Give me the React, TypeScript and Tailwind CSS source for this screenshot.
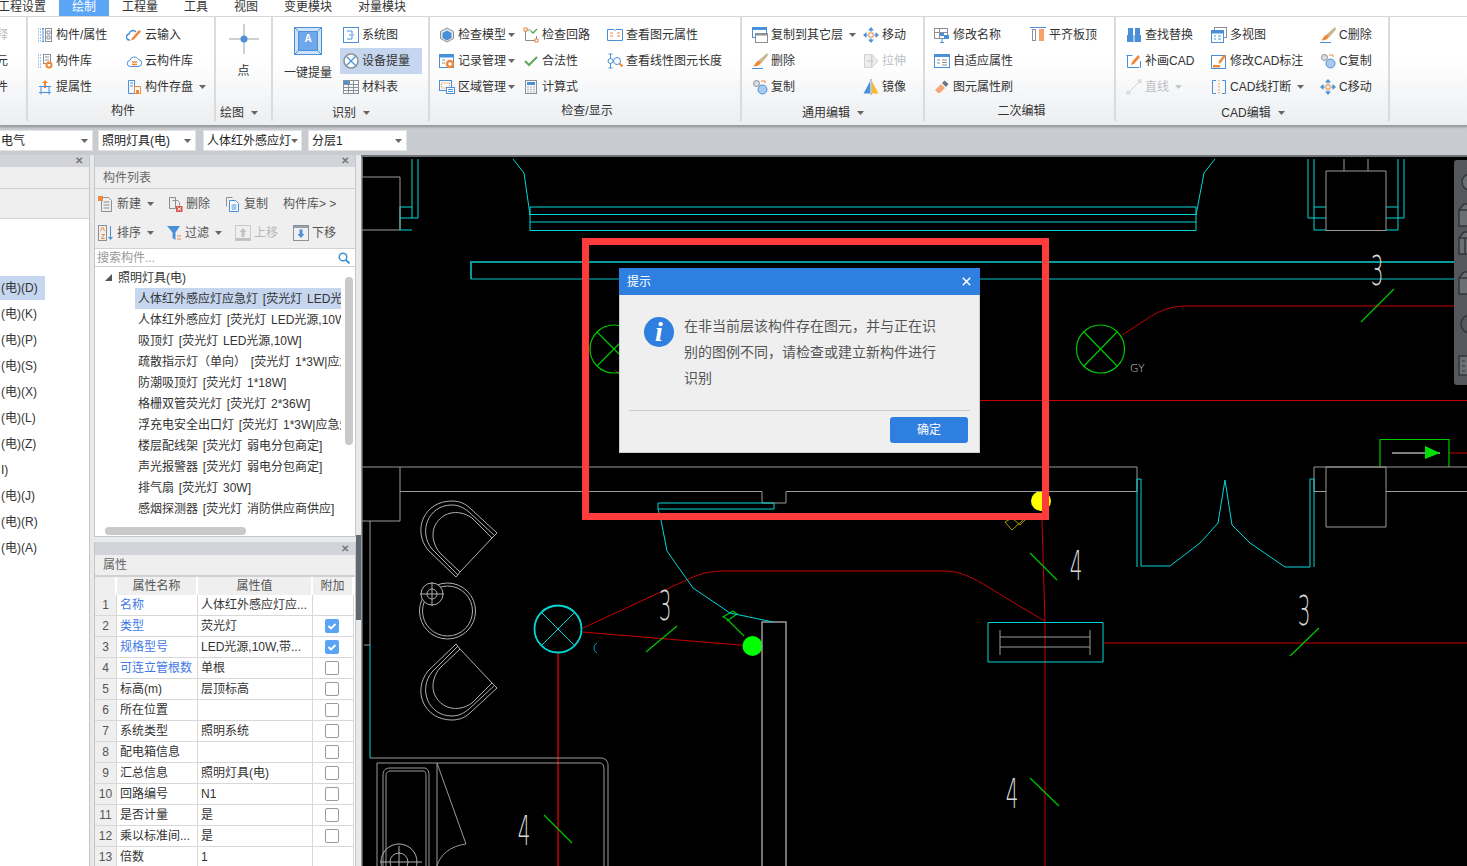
import React from "react";

const B = "#4a90d9";
const O = "#f0883a";
const G = "#8b9097";

function Ico({ children }: { children: React.ReactNode }) {
  return (
    <svg width="16" height="16" viewBox="0 0 16 16" fill="none" strokeWidth="1" className="shrink-0">
      {children}
    </svg>
  );
}

const icons: Record<string, React.ReactNode> = {
  attr: <><path d="M1 2h3M1 5h3M1 8h3M1 11h3M1 14h3" stroke={B} strokeDasharray="1 1" /><path d="M5 1.500h2M5 14.500h2M6 1.500v13" stroke={B} /><rect x="8.500" y="1.500" width="6" height="13" stroke={G} /><path d="M10 4h3v3h-3zM10 9h3v3h-3z" stroke={G} /></>,
  lib: <><path d="M1 2h3M1 5h3M1 8h3M1 11h3M1 14h3" stroke={B} strokeDasharray="1 1" /><rect x="6.500" y="1.500" width="7" height="9" stroke={G} /><path d="M8 4h4M8 7h4" stroke={G} /><circle cx="12" cy="12" r="2.500" stroke={O} strokeWidth="2" /></>,
  up: <><path d="M8 1 5 4h2v5h2V4h2z" fill={O} /><path d="M2 7.500h12M2 13.500h12M4 7.500v8M12 7.500v8" stroke={B} /></>,
  cloudIn: <><path d="M4 13a3 3 0 0 1-1-6 4 4 0 0 1 7-2" stroke={B} strokeWidth="1.500" /><path d="M6 11 13 3l2 1.500-7 8-3 1z" fill={O} /></>,
  cloudLib: <><path d="M4.500 13.500a3 3 0 0 1-.5-6 4.500 4.500 0 0 1 8.500-1 3.500 3.500 0 0 1-.5 7z" stroke={B} /><path d="M6 9h5M6 11.500h5" stroke={O} strokeWidth="1.500" /></>,
  save: <><path d="M2.500 14.500v-13h6v13z" stroke={B} /><path d="M4 4h3M4 7h3" stroke={B} /><path d="M8.500 7.500h6v7h-6z" stroke={O} fill="#fff" /><rect x="10" y="11" width="3" height="3" fill={O} /></>,
  sysd: <><rect x="0.500" y="0.500" width="15" height="15" stroke={B} /><path d="M4 4h5v3M6 8h5M4 12h5V9" stroke={B} /></>,
  device: <><circle cx="8" cy="8" r="7" stroke={G} strokeWidth="1.500" fill="#fff" /><path d="m3.500 3.500 9 9M12.500 3.500l-9 9" stroke={B} strokeWidth="1.200" /></>,
  table: <><rect x="0.500" y="1.500" width="15" height="13" stroke={G} /><rect x="1" y="2" width="6" height="3" fill={B} /><path d="M.5 5.500h15M.5 8.500h15M.5 11.500h15M5.500 2v12.500M10.500 2v12.500" stroke={G} /></>,
  cube: <><path d="M8 1 1.500 4.500v7L8 15l6.500-3.500v-7z" stroke={G} fill="#e3e6ea" /><path d="M8 3.500 3.500 6v5L8 13.500l4.500-2.500V6z" fill={B} /></>,
  record: <><rect x="0.500" y="1.500" width="14" height="13" stroke={B} fill="#fff" /><rect x="1" y="2" width="13" height="2.500" fill={B} /><path d="M3 7h3M3 10h3" stroke={G} /><circle cx="11" cy="11" r="3" stroke={O} strokeWidth="2.500" /></>,
  region: <><rect x="0.500" y="1.500" width="12" height="10" stroke={B} /><rect x="2.500" y="4" width="8" height="5" stroke={O} strokeDasharray="1 1" /><rect x="7.500" y="8.500" width="8" height="6" stroke={B} fill="#fff" /><path d="M9 10.500h5M9 12.500h5" stroke={B} /></>,
  loop: <><rect x="1" y="1" width="3" height="3" stroke={O} /><rect x="12" y="12" width="3" height="3" stroke={O} /><path d="M4 3h4M2.500 4v9.500H12M13.500 12V9" stroke={G} /><path d="m8 4 2 2 4-4" stroke="#4aa84a" strokeWidth="1.300" /></>,
  check: <path d="m2 8 4 4 8-8" stroke="#5aa85a" strokeWidth="2" />,
  calc: <><rect x="2.500" y="1.500" width="11" height="13" stroke={G} /><rect x="4" y="3" width="8" height="3" fill={B} /><path d="M4.500 8h1M7.500 8h1M10.500 8h1M4.500 10.500h1M7.500 10.500h1M10.500 10.500h1M4.500 12.800h1M7.500 12.800h1M10.500 12.800h1" stroke={G} strokeWidth="1.300" /></>,
  book: <><path d="M.5 13.500h15M.5 2.500h6.500l1 1 1-1h6.500v11" stroke={B} /><path d="M.5 2.500v11" stroke={B} /><path d="M3 6h3M3 9h3M10 6h3M10 9h3" stroke={O} /></>,
  lineLen: <><path d="M3.500 1v14M1.500 1h4M1.500 15h4" stroke={B} /><circle cx="3.500" cy="8" r="2.500" stroke={B} fill="#fff" /><circle cx="10" cy="8" r="3.500" stroke={B} fill="#fff" /><path d="m12.500 10.500 3 3" stroke={O} strokeWidth="2" /></>,
  copyLayer: <><rect x="0.500" y="0.500" width="14" height="10" stroke={B} /><rect x="0.500" y="0.500" width="14" height="2.500" fill={B} /><rect x="3.500" y="6.500" width="12" height="9" stroke={G} fill="#fff" /><rect x="3.500" y="6.500" width="12" height="2" fill={G} /></>,
  move: <><path d="M8 0 5 3.500h6zM8 16l-3-3.500h6zM0 8l3.500-3v6zM16 8l-3.500-3v6z" fill={B} /><path d="M8 3v2M8 11v2M3 8h2M11 8h2" stroke={B} /><rect x="6" y="6" width="4" height="4" stroke={O} /></>,
  brush: <><path d="M15 .5 7 7.500l2 2.500 6.500-7.500z" fill="#d9b67a" stroke="#999" strokeWidth="0.500" /><path d="M7 7.500C4 8.500 3 11 1.500 13.500 4.500 13.500 7.500 12.500 9 10z" fill={O} /><path d="M0 15.500h11" stroke={B} /></>,
  stretch: <><path d="M1.500 1.500h7v13h-7zM9 1.500l6 6.500-6 6.500z" stroke="#cfd1d4" fill="#eceded" /><path d="M4 8h6" stroke="#bdbfc2" /></>,
  copy: <><circle cx="4.500" cy="4.500" r="3" stroke={G} fill="#d9dde2" /><circle cx="10.500" cy="10.500" r="4.500" stroke={B} fill="#a9c9ee" /><path d="M9 2h4v2" stroke={O} /></>,
  mirror: <><path d="M7 2.500v12H.5z" fill={B} /><path d="M9 2.500v12h6.500z" fill="#f5b82e" /><path d="M8 0v16" stroke={G} /></>,
  rename: <><rect x="0.500" y="1.500" width="13" height="10" stroke={G} /><path d="M.5 5.500h13M5.500 1.500v10" stroke={G} /><rect x="6" y="6" width="4" height="3" fill={B} /><rect x="10" y="8" width="5" height="4" fill={B} /><path d="M8 11v4M6 15.500h4" stroke={B} /></>,
  alignTop: <><path d="M0 .5h16" stroke={B} /><rect x="2.500" y="2.500" width="3" height="11" stroke={G} /><rect x="9" y="2" width="5" height="12" fill="#f7a06a" /></>,
  fit: <><rect x="0.500" y="1.500" width="15" height="13" stroke={B} fill="#fff" /><rect x="1" y="2" width="14" height="2" fill={B} /><path d="M3 7h3M3 10h3M8 7h5M8 9.500h5M8 12h5" stroke={G} /></>,
  paint: <><path d="m1 11 6-6 4 4-5 5H4z" fill="#f7a77a" /><path d="m8 4 2.500-2.500L14.500 5 12 8z" fill="#6d7480" /></>,
  find: <><rect x="1" y="8" width="14" height="7" fill={B} /><rect x="2" y="1" width="5" height="8" fill={B} /><rect x="9" y="1" width="5" height="8" fill={B} /><path d="M8 7v8" stroke="#fff" /></>,
  redraw: <><path d="M1.500 2v12.500H13" stroke={B} /><path d="M.5 2.500h6M14.500 8v7" stroke={B} /><path d="m6 9 6-7 2 2-6 7-3 1z" fill={O} /></>,
  line: <><path d="M2.500 13.500 13.500 2.500" stroke="#cfd1d4" /><rect x="1" y="12.500" width="2.500" height="2.500" stroke="#cfd1d4" /><rect x="12.500" y="1" width="2.500" height="2.500" stroke="#cfd1d4" /></>,
  multi: <><rect x="3.500" y="0.500" width="12" height="10" stroke={G} /><rect x="0.500" y="3.500" width="12" height="12" stroke={B} fill="#fff" /><rect x="1" y="4" width="11" height="2.500" fill={B} /><path d="M3 9h2M7 9h3M3 12h2M7 12h3" stroke={B} /></>,
  cadDim: <><rect x="0.500" y="2.500" width="14" height="13" stroke={B} /><path d="m8 8 5-6.500 2 1.500-5 6.500L7.500 11z" fill={O} /><path d="M2 12h7v2.500H2z" fill={O} /></>,
  cadBreak: <><path d="M5 1.500H1.500v13H5M11 1.500h3.500v13H11" stroke={B} /><path d="M8 1v14" stroke={O} strokeDasharray="1.500 1.500" /></>,
  newDoc: <><path d="M3.500 1.500h7l3 3v11h-10z" stroke={G} /><path d="M5.500 6h6M5.500 9h6M5.500 12h6" stroke={G} /><rect x="0" y="0" width="5" height="5" fill={O} /></>,
  del: <><path d="M2.500 1.500h6v11h-6z" stroke={G} /><path d="M5.500 4.500h5l2 2v3" stroke={G} /><rect x="9" y="10" width="6.500" height="6" fill="#d9534f" /><path d="m10.500 11.500 3.500 3M14 11.500l-3.500 3" stroke="#fff" /></>,
  dup: <><path d="M1.500 10.500v-9h6" stroke={G} /><path d="M4.500 4.500h6l3 3v8h-9z" stroke={B} fill="#fff" /><path d="M6.500 9h5M6.500 11h5M6.500 13h5" stroke={B} /></>,
  sort: <><rect x="0.500" y="0.500" width="8" height="15" stroke={G} /><path d="M12.500 1v13" stroke={B} /><path d="m10 12 2.500 3 2.500-3z" fill={B} /><path d="M2.500 6l2-4 2 4M3.500 9.500h3l-3 4h3" stroke={O} /></>,
  filter: <><path d="M1 1h13L9.500 7.500V15L6.500 13V7.500z" fill={B} /><path d="M11 11h4M11 14h4" stroke={O} /></>,
  upDis: <><rect x="0.500" y="0.500" width="15" height="15" stroke="#c9cbce" /><rect x="1" y="13" width="14" height="2.500" fill="#bfc1c4" /><path d="M8 3 4.500 7h2v5h3V7h2z" fill="#c0c2c5" /></>,
  down: <><rect x="0.500" y="0.500" width="15" height="15" stroke={G} /><rect x="1" y="1" width="14" height="2" fill="#9aa0a7" /><path d="M8 13 4.500 9h2V4.500h3V9h2z" fill={B} /></>,
};

function Caret({ light }: { light?: boolean }) {
  return (
    <svg width="7" height="4" viewBox="0 0 7 4" className="shrink-0">
      <path d="M0 0h7L3.500 4z" fill={light ? "#c4c6c9" : "#666"} />
    </svg>
  );
}

function Item({
  icon,
  label,
  caret,
  off,
  hi,
  caretGap = "ml-[6px]",
}: {
  icon: string;
  label: string;
  caret?: boolean;
  off?: boolean;
  hi?: boolean;
  caretGap?: string;
}) {
  return (
    <div className={`flex items-center h-[26px] ${hi ? "bg-[#c5d6ee] -ml-[3px] pl-[3px] w-[82px]" : ""}`}>
      <Ico>{icons[icon]}</Ico>
      <span className={`ml-[3px] whitespace-nowrap ${off ? "text-[#bdbfc2]" : "text-[#333]"}`}>{label}</span>
      {caret && <span className={`${caretGap} flex`}><Caret light={off} /></span>}
    </div>
  );
}

function Group({
  w,
  title,
  caret,
  pl,
  low,
  tm,
  children,
}: {
  w: string;
  title: string;
  caret?: boolean;
  pl?: string;
  low?: boolean;
  tm?: string;
  children: React.ReactNode;
}) {
  return (
    <div className={`${w} shrink-0 flex flex-col border-r-2 border-[#d9dbdd] h-[104px] ${pl ?? "pl-[9px]"}`}>
      <div className="flex h-[78px] mt-[5px]">{children}</div>
      <div className={`flex items-center justify-center gap-[7px] text-[#333] ${low ? "mt-[5px]" : "mt-[3px]"} ${tm ?? "-ml-[5px]"}`}>
        {title}
        {caret && <Caret />}
      </div>
    </div>
  );
}

function Ribbon() {
  return (
    <div className="h-[109px] flex border-b border-[#9a9da1] bg-gradient-to-b from-white from-40% to-[#eceef0] shadow-[0_1px_2px_#8a8d91] relative">
      <div className="w-[28px] shrink-0 border-r-2 border-[#d9dbdd] h-[104px] overflow-hidden pt-[5px] flex flex-col">
        <div className="h-[26px] leading-[26px] -ml-[4px] text-[#bbb]">释</div>
        <div className="h-[26px] leading-[26px] -ml-[4px] text-[#333]">元</div>
        <div className="h-[26px] leading-[26px] -ml-[4px] text-[#333]">件</div>
      </div>
      <Group w="w-[188px]" title="构件">
        <div className="w-[89px]">
          <Item icon="attr" label="构件/属性" />
          <Item icon="lib" label="构件库" />
          <Item icon="up" label="提属性" />
        </div>
        <div>
          <Item icon="cloudIn" label="云输入" />
          <Item icon="cloudLib" label="云构件库" />
          <Item icon="save" label="构件存盘" caret />
        </div>
      </Group>
      <Group w="w-[57px]" title="绘图" caret low pl="pl-0" tm="-ml-[9px]">
        <div className="w-[55px] flex flex-col items-center">
          <svg width="30" height="30" viewBox="0 0 30 30" className="mt-[2px]">
            <path d="M15 0v30M0 15h30" stroke="#9aa0a7" />
            <circle cx="15" cy="15" r="3.500" fill={B} />
          </svg>
          <span className="mt-[9px] text-[#333]">点</span>
        </div>
      </Group>
      <Group w="w-[157px]" title="识别" caret low pl="pl-[6px]">
        <div className="w-[58px] flex flex-col items-center">
          <svg width="28" height="28" viewBox="0 0 28 28" className="mt-[5px]">
            <rect x="0.500" y="0.500" width="27" height="27" fill="#cfe2f7" stroke={B} />
            <path d="M.5.5l4 4M27.500.5l-4 4M.5 27.500l4-4M27.500 27.500l-4-4" stroke={B} />
            <rect x="4.500" y="4.500" width="19" height="19" fill="#6fa8ea" stroke={B} />
            <text x="14" y="15" textAnchor="middle" fontSize="10" fill="#fff" fontWeight="700">A</text>
          </svg>
          <span className="mt-[10px] text-[#333] whitespace-nowrap">一键提量</span>
        </div>
        <div className="ml-[6px]">
          <Item icon="sysd" label="系统图" />
          <Item icon="device" label="设备提量" hi />
          <Item icon="table" label="材料表" />
        </div>
      </Group>
      <Group w="w-[312px]" title="检查/显示">
        <div className="w-[84px]">
          <Item icon="cube" label="检查模型" caret caretGap="ml-[2px]" />
          <Item icon="record" label="记录管理" caret caretGap="ml-[2px]" />
          <Item icon="region" label="区域管理" caret caretGap="ml-[2px]" />
        </div>
        <div className="w-[84px]">
          <Item icon="loop" label="检查回路" />
          <Item icon="check" label="合法性" />
          <Item icon="calc" label="计算式" />
        </div>
        <div>
          <Item icon="book" label="查看图元属性" />
          <Item icon="lineLen" label="查看线性图元长度" />
        </div>
      </Group>
      <Group w="w-[183px]" title="通用编辑" caret low pl="pl-[10px]" tm="-ml-[9px]">
        <div className="w-[111px]">
          <Item icon="copyLayer" label="复制到其它层" caret />
          <Item icon="brush" label="删除" />
          <Item icon="copy" label="复制" />
        </div>
        <div>
          <Item icon="move" label="移动" />
          <Item icon="stretch" label="拉伸" off />
          <Item icon="mirror" label="镜像" />
        </div>
      </Group>
      <Group w="w-[191px]" title="二次编辑">
        <div className="w-[96px]">
          <Item icon="rename" label="修改名称" />
          <Item icon="fit" label="自适应属性" />
          <Item icon="paint" label="图元属性刷" />
        </div>
        <div>
          <Item icon="alignTop" label="平齐板顶" />
        </div>
      </Group>
      <Group w="w-[274px]" title="CAD编辑" caret low pl="pl-[10px]" tm="-ml-[8px]">
        <div className="w-[85px]">
          <Item icon="find" label="查找替换" />
          <Item icon="redraw" label="补画CAD" />
          <Item icon="line" label="直线" off caret />
        </div>
        <div className="w-[109px]">
          <Item icon="multi" label="多视图" />
          <Item icon="cadDim" label="修改CAD标注" />
          <Item icon="cadBreak" label="CAD线打断" caret />
        </div>
        <div>
          <Item icon="brush" label="C删除" />
          <Item icon="copy" label="C复制" />
          <Item icon="move" label="C移动" />
        </div>
      </Group>
    </div>
  );
}

function Select({ w, text }: { w: string; text: string }) {
  return (
    <div className={`${w} shrink-0 h-[21px] bg-white border border-[#e2e3e5] flex items-center pl-[3px] pr-[4px] justify-between text-[#222] whitespace-nowrap`}>
      <span>{text}</span>
      <Caret />
    </div>
  );
}

function PanelBar({ h }: { h: string }) {
  return (
    <div className={`${h} shrink-0 bg-[#d2d4d9] flex items-center justify-end pr-[6px] text-[10px] leading-none text-[#777] font-bold`}>
      ✕
    </div>
  );
}

const leftRows = ["(电)(D)", "(电)(K)", "(电)(P)", "(电)(S)", "(电)(X)", "(电)(L)", "(电)(Z)", "I)", "(电)(J)", "(电)(R)", "(电)(A)"];

function LeftPanel() {
  return (
    <div className="w-[90px] shrink-0 flex flex-col bg-white border-r border-[#c4c6c9] text-[#333]">
      <PanelBar h="h-[12px]" />
      <div className="h-[22px] shrink-0 bg-[#efefef] border-b border-[#cfd1d3]" />
      <div className="h-[30px] shrink-0 bg-[#efefef] border-b border-[#cfd1d3]" />
      <div className="pt-[56px] flex flex-col">
        {leftRows.map((r, i) => (
          <div key={r} className="h-[26px] flex items-center">
            <div className={`h-[24px] w-[45px] flex items-center pl-[1px] ${i === 0 ? "bg-[#c5d6ee]" : ""}`}>{r}</div>
          </div>
        ))}
      </div>
    </div>
  );
}

const treeRows = [
  "人体红外感应灯应急灯 [荧光灯 LED光源,10W,带应急]",
  "人体红外感应灯 [荧光灯 LED光源,10W,带]",
  "吸顶灯 [荧光灯 LED光源,10W]",
  "疏散指示灯（单向） [荧光灯 1*3W|应急]",
  "防潮吸顶灯 [荧光灯 1*18W]",
  "格栅双管荧光灯 [荧光灯 2*36W]",
  "浮充电安全出口灯 [荧光灯 1*3W|应急灯]",
  "楼层配线架 [荧光灯 弱电分包商定]",
  "声光报警器 [荧光灯 弱电分包商定]",
  "排气扇 [荧光灯 30W]",
  "感烟探测器 [荧光灯 消防供应商供应]",
];

function Tool({ w, icon, label, caret, off }: { w: string; icon: string; label: string; caret?: boolean; off?: boolean }) {
  return (
    <div className={`${w} shrink-0 flex items-center`}>
      <Ico>{icons[icon]}</Ico>
      <span className={`ml-[3px] whitespace-nowrap ${off ? "text-[#b5b7ba]" : "text-[#555]"}`}>{label}</span>
      {caret && <span className="ml-[6px] flex"><Caret /></span>}
    </div>
  );
}

function ListPanel() {
  return (
    <div className="h-[382px] shrink-0 flex flex-col bg-white border border-t-0 border-[#c4c6c9] relative overflow-hidden">
      <PanelBar h="h-[12px]" />
      <div className="h-[22px] shrink-0 bg-[#efefef] border-b border-[#cfd1d3] flex items-center pl-[8px] text-[#666]">构件列表</div>
      <div className="h-[59px] shrink-0 bg-[#efefef] flex flex-col pl-[3px]">
        <div className="h-[29px] flex items-center">
          <Tool w="w-[69px]" icon="newDoc" label="新建" caret />
          <Tool w="w-[58px]" icon="del" label="删除" />
          <Tool w="w-[58px]" icon="dup" label="复制" />
          <span className="text-[#555] whitespace-nowrap">构件库&gt; &gt;</span>
        </div>
        <div className="h-[29px] flex items-center">
          <Tool w="w-[68px]" icon="sort" label="排序" caret />
          <Tool w="w-[69px]" icon="filter" label="过滤" caret />
          <Tool w="w-[58px]" icon="upDis" label="上移" off />
          <Tool w="w-[58px]" icon="down" label="下移" />
        </div>
      </div>
      <div className="h-[19px] shrink-0 border-y border-[#cfd1d3] flex items-center justify-between pl-[2px] pr-[5px] text-[#999]">
        <span>搜索构件...</span>
        <svg width="12" height="12" viewBox="0 0 12 12" fill="none">
          <circle cx="5" cy="5" r="3.800" stroke="#3a8fd0" strokeWidth="1.400" />
          <path d="m8 8 3.500 3.500" stroke="#3a8fd0" strokeWidth="1.800" />
        </svg>
      </div>
      <div className="h-[21px] shrink-0 flex items-center pl-[10px] text-[#333]">
        <svg width="7" height="7" viewBox="0 0 7 7"><path d="M7 0v7H0z" fill="#555" /></svg>
        <span className="ml-[6px]">照明灯具(电)</span>
      </div>
      {treeRows.map((r, i) => (
        <div
          key={r}
          className={`h-[21px] shrink-0 ml-[40px] w-[206px] pl-[3px] flex items-center overflow-hidden whitespace-nowrap text-[#333] [word-spacing:1.5px] ${i === 0 ? "bg-[#c5d6ee]" : ""}`}
        >
          {r}
        </div>
      ))}
      <div className="absolute left-[250px] top-[122px] w-[8px] h-[168px] rounded-full bg-[#c9c9c9]" />
      <div className="absolute left-[10px] top-[372px] w-[141px] h-[8px] rounded-full bg-[#c9c9c9]" />
    </div>
  );
}

const propRows: [string, string, boolean | null, boolean][] = [
  ["名称", "人体红外感应灯应...", null, true],
  ["类型", "荧光灯", true, true],
  ["规格型号", "LED光源,10W,带...", true, true],
  ["可连立管根数", "单根", false, true],
  ["标高(m)", "层顶标高", false, false],
  ["所在位置", "", false, false],
  ["系统类型", "照明系统", false, false],
  ["配电箱信息", "", false, false],
  ["汇总信息", "照明灯具(电)", false, false],
  ["回路编号", "N1", false, false],
  ["是否计量", "是", false, false],
  ["乘以标准间...", "是", false, false],
  ["倍数", "1", null, false],
];

function PropPanel() {
  return (
    <div className="flex-1 flex flex-col bg-white border-x border-[#c4c6c9] overflow-hidden">
      <PanelBar h="h-[13px]" />
      <div className="h-[22px] shrink-0 bg-[#efefef] border-b-2 border-[#cfd1d3] flex items-center pl-[8px] text-[#666]">属性</div>
      <div className="grid grid-cols-[22px_81px_115px_41px] grid-rows-[18px] auto-rows-[21px] text-[#333]">
        <div className="bg-[#efefef] border-r-2 border-white" />
        <div className="bg-[#efefef] border-r-2 border-white flex items-center justify-center text-[#555]">属性名称</div>
        <div className="bg-[#efefef] border-r-2 border-white flex items-center justify-center text-[#555]">属性值</div>
        <div className="bg-[#efefef] border-r-2 border-white flex items-center justify-center text-[#555]">附加</div>
        {propRows.map(([name, value, checked, blue], i) => (
          <React.Fragment key={name}>
            <div className="bg-[#efefef] border-b border-r border-[#d8d8d8] flex items-center justify-center text-[#555]">{i + 1}</div>
            <div className={`border-b border-r border-[#d8d8d8] flex items-center pl-[3px] whitespace-nowrap overflow-hidden ${blue ? "text-[#3f78e6]" : ""}`}>{name}</div>
            <div className="border-b border-r border-[#d8d8d8] flex items-center pl-[3px] whitespace-nowrap overflow-hidden">{value}</div>
            <div className="border-b border-r border-[#d8d8d8] flex items-center justify-center pr-[2px]">
              {checked === true && (
                <svg width="14" height="14" viewBox="0 0 14 14">
                  <rect width="14" height="14" rx="2" fill="#5ba4f5" />
                  <path d="m3.500 7 2.500 2.500 4.500-4.500" stroke="#fff" strokeWidth="1.800" fill="none" />
                </svg>
              )}
              {checked === false && <div className="w-[14px] h-[14px] rounded-[2px] border border-[#9a9a9a] bg-white" />}
            </div>
          </React.Fragment>
        ))}
      </div>
    </div>
  );
}

function Chair({ flip }: { flip?: boolean }) {
  return (
    <g transform={flip ? "translate(0 1221) scale(1 -1)" : undefined} stroke="#b0b0b0" fill="none">
      <path d="M456 577 428 550C412 530 424 501 452 501 460 501 466 504 471 509L497 533 492 538" />
      <path d="M458 575 432 549C418 532 428 505 452 505 459 505 464 508 469 512L495 536" />
      <path d="M492 538 472 518C458 508 440 512 434 528 431 538 435 547 440 553L460 572 492 538M456 577 460 572" />
    </g>
  );
}

function Num({ x, y, children }: { x: number; y: number; children: string }) {
  return (
    <text
      transform={`translate(${x} ${y}) scale(0.5 1)`}
      fontFamily="DejaVu Sans"
      fontWeight="200"
      fontSize="40"
      fill="#d8d8d8"
      textAnchor="middle"
    >
      {children}
    </text>
  );
}

function Drawing() {
  const cyan = "#00d8d8";
  const teal = "#0a9a9a";
  const gray = "#9a9a9a";
  const red = "#c80000";
  const green = "#00c800";
  return (
    <svg width="1106" height="709" viewBox="361 157 1106 709" fill="none" strokeWidth="1" className="block">
      {/* ceiling band */}
      <g stroke={cyan}>
        <path d="M530 207H1196V230.500H530ZM530 214.500H1196M530 222H1196" />
        <path d="M1196 215 1204 173 1215 159M530 215 524 173 513 159" />
        <path d="M1308 159V218H1314M1314 159V230H1326M1314 207H1326M1314 218H1326M1404 159V218H1398M1398 159V230H1386M1398 207H1386M1398 218H1386" />
        <path d="M412 159V218H418V159M412 207H400M412 218H400M412 230H400V207" />
      </g>
      <g stroke={gray}>
        <path d="M1326 171H1386V230.500H1326ZM1344 159V171M1368 159V171" />
        <path d="M362 177H400V230H362M362 177V159" />
        <path d="M361.500 157V866" strokeWidth="2" />
      </g>
      <path d="M471 279V262H1467" stroke={teal} strokeWidth="2" />
      <path d="M471 279H1467" stroke="#00c4c4" />
      {/* wiring */}
      <g stroke={red}>
        <path d="M1122 335C1150 318 1160 306 1187 306H1467" />
        <path d="M620 400.500H1467" />
        <path d="M583 628 680 583C700 573 710 571 725 571H945C970 571 990 590 1045 621" />
        <path d="M582 632 752 646" />
        <path d="M558 653V866" strokeWidth="1.500" />
        <path d="M1042 520 1045 622V866" />
        <path d="M1103 643H1467" />
        <path d="M1449 453H1467" />
        <path d="M615 370 625 380" />
      </g>
      <g stroke={green} strokeWidth="1.200">
        <circle cx="1100.500" cy="349" r="24" />
        <path d="M1084 332 1117 366M1117 332 1084 366" />
        <circle cx="614" cy="349" r="24" />
        <path d="M597 332 631 366M631 332 597 366" />
        <path d="M1361 322 1394 289M646 652 677 626M544 815 572 843M1030 553 1057 580M1030 778 1059 806M1290 656 1319 628" />
        <path d="M744 636 727 619 723 617 733 611 737 614 727 621" />
        <path d="M1380 467V439.500H1449V467" />
      </g>
      <circle cx="752.500" cy="646" r="10" fill="#00ff00" />
      <path d="M1392 453H1440" stroke="#fff" />
      <path d="M1425 446 1440 453 1425 459Z" fill="#00e000" />
      <circle cx="1041" cy="501" r="10" fill="#ffff00" />
      <path d="M1032 513 1020 525 1012 518 1005 522 1012 530 1023 520" stroke="#b0a000" />
      {/* walls */}
      <g stroke={gray}>
        <path d="M362 467H1137V491.500H786V503H762V491.500H400" />
        <path d="M1467 467H1314V491.500H1326M1386 491.500H1467" />
        <path d="M1326 467H1386V527H1326Z" />
        <path d="M400 467V521H362M370 521V645M364 645H370" />
        <path d="M762 866V622H786V866" strokeWidth="1.500" />
        <path d="M370 758H601C605 758 608 761 608 765V866M377 866V763H600C603 763 604 766 604 770V866" />
        <path d="M383 866V775C383 770 386 768 390 768H424C427 768 429 770 429 775V866M386 866V776C386 772 388 771 391 771H423C425 771 426 772 426 776V866" />
        <path d="M437 763V866M437 763 466 844C450 846 440 855 437 866" />
      </g>
      <g stroke={cyan}>
        <path d="M658 509V503H774V509H658L661 520 667 551 693 588 730 613 773 622" />
        <path d="M1137 479H1141V566L1170 566 1200 543 1218 523 1225 480 1232 525 1250 543 1285 567H1310V479H1314" />
        <path d="M1137 479V567M1314 479V567" />
        <path d="M370 645V758" />
        <circle cx="558" cy="629" r="23.500" strokeWidth="1.800" />
        <path d="M541 612 575 646M575 612 541 646" />
        <path d="M988 622.500H1103V662H988Z" />
        <path d="M597 643C593 645 593 651 597 653" stroke="#0a9ac0" />
      </g>
      <g stroke={gray}>
        <path d="M1000 637H1090M1000 647H1090M1000 630V655M1090 630V655" />
      </g>
      {/* furniture */}
      <Chair />
      <Chair flip />
      <g stroke="#b0b0b0">
        <circle cx="447.500" cy="611" r="28" />
        <circle cx="447.500" cy="611" r="25" />
        <circle cx="432" cy="594" r="11" fill="#000" />
        <circle cx="432" cy="594" r="5" />
        <path d="M420 594H444M432 582V606" />
        <circle cx="399" cy="862" r="18" />
        <circle cx="399" cy="862" r="9" />
        <path d="M380 862H422M399 846V866" />
      </g>
      <Num x={1377} y={285}>3</Num>
      <Num x={665} y={620}>3</Num>
      <Num x={1304} y={625}>3</Num>
      <Num x={1076} y={580}>4</Num>
      <Num x={524} y={845}>4</Num>
      <Num x={1012} y={808}>4</Num>
      <text x="1130" y="372" fontSize="11" fontFamily="DejaVu Sans" fontWeight="200" fill="#d0d0d0">GY</text>
    </svg>
  );
}

function Dialog() {
  return (
    <div className="absolute left-[258px] top-[111px] w-[361px] h-[185px] bg-[#efefef] border border-t-0 border-[#c9ccd6] flex flex-col">
      <div className="h-[27px] shrink-0 -mx-[1px] bg-[#2f7fe0] flex items-center justify-between pl-[8px] pr-[9px] text-white">
        <span>提示</span>
        <svg width="9" height="9" viewBox="0 0 9 9">
          <path d="m.8.8 7.400 7.400M8.200.8.8 8.200" stroke="#fff" strokeWidth="1.500" />
        </svg>
      </div>
      <div className="flex h-[116px] pl-[15px] pt-[22px] border-b border-[#c9ccd6] mx-[9px]">
        <div className="w-[30px] h-[30px] shrink-0 rounded-full bg-[#2f7fe0] text-white flex items-center justify-center font-['Liberation_Serif',serif] italic font-bold text-[28px] leading-none">
          i
        </div>
        <p className="ml-[10px] w-[252px] -mt-[4px] text-[14px] leading-[26px] text-[#555]">
          在非当前层该构件存在图元，并与正在识别的图例不同，请检查或建立新构件进行识别
        </p>
      </div>
      <div className="flex justify-end pr-[11px] pt-[6px]">
        <div className="w-[78px] h-[26px] rounded-[3px] bg-[#2f7fe0] text-white flex items-center justify-center">确定</div>
      </div>
    </div>
  );
}

function SideTools() {
  return (
    <div className="absolute left-[1093px] top-[3px] w-[20px] h-[225px] rounded-[3px] bg-[#54575b]">
      <svg width="20" height="225" viewBox="0 0 20 225" fill="#6a6f75" stroke="#33373c" strokeWidth="1.500">
        <circle cx="16" cy="22" r="8" />
        <path d="M5 50 10 44H20V66H5ZM5 50H20" />
        <path d="M5 78 10 72H20V94H5ZM5 78H20M11 78V94" />
        <path d="M5 118 10 112H20V134H5ZM5 118H20" />
        <circle cx="16" cy="164" r="9" fill="none" />
        <rect x="5" y="196" width="15" height="19" />
        <path d="M8 201H11M14 201H18M8 206H11M14 206H18M8 211H11M14 211H18" strokeWidth="1" />
      </svg>
    </div>
  );
}

export default function App() {
  return (
    <div className="w-[1467px] h-[866px] overflow-hidden flex flex-col bg-[#e8e9eb] text-[12px] leading-[16px] font-['Liberation_Sans','Noto_Sans_CJK_SC',sans-serif]">
      <div className="h-[17px] shrink-0 bg-white border-b border-[#dcdddf] flex -ml-[15px] text-[#333]">
        {["工程设置", "绘制", "工程量", "工具", "视图", "变更模块", "对量模块"].map((t) => (
          <div key={t} className={`px-[13px] h-[16px] leading-[14px] ${t === "绘制" ? "bg-[#5aa5f5] text-white" : ""}`}>
            {t}
          </div>
        ))}
      </div>
      <Ribbon />
      <div className="h-[29px] shrink-0 bg-[#c8cbcf] flex items-center -ml-[3px]">
        <Select w="w-[96px]" text="电气" />
        <div className="w-[5px] shrink-0" />
        <Select w="w-[98px]" text="照明灯具(电)" />
        <div className="w-[7px] shrink-0" />
        <Select w="w-[99px]" text="人体红外感应灯" />
        <div className="w-[6px] shrink-0" />
        <Select w="w-[99px]" text="分层1" />
      </div>
      <div className="flex-1 flex min-h-0">
        <LeftPanel />
        <div className="w-[4px] shrink-0" />
        <div className="w-[262px] shrink-0 flex flex-col">
          <ListPanel />
          <div className="h-[5px] shrink-0" />
          <PropPanel />
        </div>
        <div className="w-[5px] shrink-0 flex flex-col">
          <div className="h-[380px] shrink-0 bg-[#e8e9eb]" />
          <div className="h-[85px] shrink-0 bg-[#5f6770]" />
        </div>
        <div className="flex-1 relative bg-black border-t-2 border-[#6f7378] overflow-hidden">
          <Drawing />
          <SideTools />
          <div className="absolute left-[221px] top-[81px] w-[467px] h-[282px] border-[7px] border-[#ff3b3b]" />
          <Dialog />
        </div>
      </div>
    </div>
  );
}
